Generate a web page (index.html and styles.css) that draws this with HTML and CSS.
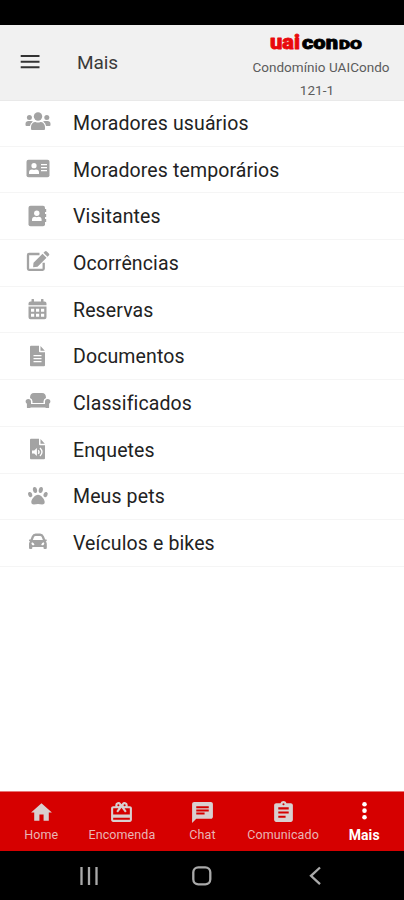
FILE: index.html
```
<!DOCTYPE html>
<html lang="pt-BR">
<head>
<meta charset="utf-8">
<meta name="viewport" content="width=device-width">
<title>Mais</title>
<link rel="stylesheet" href="styles.css">
</head>
<body>
<div class="status"></div>
<header class="header">
  <svg class="burger" width="20" height="16" viewBox="0 0 20 16"><path d="M.7 2h18.800M.7 7.800h18.800M.7 13.200h18.800" stroke="#333" stroke-width="2"/></svg>
  <h1 class="title">Mais</h1>
  <div class="condo">
    <svg class="logo" width="94" height="24" viewBox="0 0 94 24">
      <text class="logo-uai" x="1" y="18.800" textLength="30" lengthAdjust="spacingAndGlyphs">uai</text>
      <text class="logo-con" x="33" y="18.800" textLength="36" lengthAdjust="spacingAndGlyphs">con</text>
      <text class="logo-do" x="70" y="18.800" textLength="23" lengthAdjust="spacingAndGlyphs">DO</text>
    </svg>
    <span class="condo-name">Condomínio UAICondo</span>
    <span class="condo-unit">121-1</span>
  </div>
</header>
<main class="list">
  <a class="row"><svg class="icon" viewBox="0 0 28 28"><circle cx="14" cy="8.500" r="4.200"/><circle cx="5.400" cy="9.500" r="2.500"/><circle cx="22.800" cy="9.500" r="2.500"/><path d="M7 21v-2c0-3 2-5 4.500-5q2.500 1 5 0c2.500 0 4.500 2 4.500 5v2q0 1-1 1H8q-1 0-1-1ZM4.500 13h2.800q1 0 1.600.5-2.600 1.500-3 4.500H2.500q-1 0-1-1v-1.200Q1.700 13 4.500 13ZM23.500 13h-2.800q-1 0-1.600.5 2.600 1.500 3 4.500h3.400q1 0 1-1v-1.200Q26.300 13 23.500 13Z"/></svg><span>Moradores usuários</span></a>
  <a class="row"><svg class="icon" viewBox="0 0 28 28"><rect x="2.500" y="4.800" width="23" height="17.500" rx="2"/><g fill="#fff"><circle cx="10" cy="10.700" r="2.600"/><path d="M5 19v-1.500q0-3 3-3 2 .8 4 0 3 0 3 3v1.500ZM17 9h6v1.200h-6zM17 12h6v1.200h-6zM17 15h6v1.200h-6z"/></g></svg><span>Moradores temporários</span></a>
  <a class="row"><svg class="icon" viewBox="0 0 28 28"><rect x="4.500" y="3.800" width="16.500" height="20.500" rx="2"/><path d="M20.500 7h1.700v3h-1.700zM20.500 12h1.700v3h-1.700zM20.500 17h1.700v3h-1.700z"/><g fill="#fff"><circle cx="12.800" cy="11.200" r="2.700"/><path d="M8 19v-1.300q0-2.900 3-2.900 1.800.8 3.600 0 3 0 3 2.900V19Z"/></g></svg><span>Visitantes</span></a>
  <a class="row"><svg class="icon" viewBox="0 0 28 28"><path d="M15.500 6H5q-1 0-1 1v13.800q0 1 1 1h13.700q1 0 1-1v-6" fill="none" stroke="#a3a3a3" stroke-width="2.300"/><path d="m9.500 14.800 9-9 4 4-9 9-4.400.5ZM19.500 4.800l1.300-1.300q1-1 2 0l2 2q1 1 0 2l-1.300 1.300Z"/></svg><span>Ocorrências</span></a>
  <a class="row"><svg class="icon" viewBox="0 0 28 28"><path d="M7.500 4.500Q7.500 4 8 4h1.500q.5 0 .5.500v2h7v-2q0-.5.500-.5H19q.5 0 .5.500v2h1q2 0 2 2v1.700h-18V8.500q0-2 2-2h1ZM4.500 11.500h18v10.700q0 2-2 2h-14q-2 0-2-2Z"/><path fill="#fff" d="M7 13.800h3.200v2.900H7zM12 13.800h3.200v2.900H12zM17 13.800h3.200v2.900H17zM7 18.800h3.200v2.900H7zM12 18.800h3.200v2.900H12zM17 18.800h3.200v2.900H17z"/></svg><span>Reservas</span></a>
  <a class="row"><svg class="icon" viewBox="0 0 28 28"><path d="M7 3.800h8v5.500q0 1 1 1h5v13q0 1-1 1H7q-1 0-1-1V4.800q0-1 1-1ZM16.500 4l4.300 4.800h-4.300Z"/><path fill="#fff" d="M9.500 13h8v1.300h-8zM9.500 16h8v1.300h-8zM9.500 19h8v1.300h-8z"/></svg><span>Documentos</span></a>
  <a class="row"><svg class="icon" viewBox="0 0 28 28"><path d="M6 10q0-5 4-5h8q4 0 4 5-2.500.7-2.500 3.500V15h-11v-1.500Q8.500 10.700 6 10Z"/><path d="M4.300 11q2.700 0 2.700 2.700v2.300h14v-2.300q0-2.700 2.700-2.700t2.700 2.500q0 1.400-1.300 2.300v3.700q0 .6-.6.600h-2.400q-.6 0-.6-.7h-15q0 .7-.6.700H3.500q-.6 0-.6-.6v-3.700q-1.300-.9-1.300-2.300 0-2.500 2.700-2.500Z"/></svg><span>Classificados</span></a>
  <a class="row"><svg class="icon" viewBox="0 0 28 28"><path d="M7 3.800h8v5.500q0 1 1 1h5v13q0 1-1 1H7q-1 0-1-1V4.800q0-1 1-1ZM16.500 4l4.300 4.800h-4.300Z"/><path fill="#fff" d="M8 15.500h2.200l2.700-2.500v8l-2.700-2.500H8Z"/><path fill="none" stroke="#fff" stroke-width="1.300" d="M14.200 15.200q1.800 1.800 0 3.600M16 13q4 4 0 8"/></svg><span>Enquetes</span></a>
  <a class="row"><svg class="icon" viewBox="0 0 28 28"><ellipse cx="6.200" cy="12.600" rx="2" ry="2.700" transform="rotate(-22 6.200 12.600)"/><ellipse cx="11" cy="8" rx="2.100" ry="3" transform="rotate(-10 11 8)"/><ellipse cx="16.800" cy="8" rx="2.100" ry="3" transform="rotate(10 16.800 8)"/><ellipse cx="21.600" cy="12.600" rx="2" ry="2.700" transform="rotate(22 21.600 12.600)"/><path d="M14 12.800c3 0 6.700 4.600 6.700 7.300 0 3.800-4.200 2-6.700 2s-6.700 1.800-6.700-2c0-2.700 3.700-7.300 6.700-7.300Z"/></svg><span>Meus pets</span></a>
  <a class="row"><svg class="icon" viewBox="0 0 28 28"><path fill-rule="evenodd" d="m6.500 10.500 1.300-3.300Q8.900 4.600 11.600 4.600h4.500q2.700 0 3.800 2.600l1.300 3.300h1q.8 0 .6.800l-.2.800q-.1.400-.9.500 1.100.7 1.100 2.200v4.300q0 1-1 1h-1.300q-1 0-1-1v-1.200H8.300v1.200q0 1-1 1H6q-1 0-1-1v-4.300q0-1.500 1.100-2.200-.8-.1-.9-.5l-.2-.8q-.2-.8.6-.8ZM8.800 11h10.100L17.700 8q-.4-1-1.600-1h-4.500q-1.200 0-1.600 1ZM8 13.200a1.500 1.500 0 1 0 2.500 2.500Q9.700 13.400 8 13.200ZM19.700 13.200a1.500 1.500 0 1 1-2.500 2.500q.8-2.300 2.500-2.500Z"/></svg><span>Veículos e bikes</span></a>
</main>
<nav class="tabs">
  <a class="tab"><svg viewBox="0 0 24 24"><path d="M10 20v-6h4v6h5v-8h3L12 3 2 12h3v8z"/></svg><span>Home</span></a>
  <a class="tab"><svg viewBox="0 0 24 24"><path d="M20 6h-2.180c.11-.31.180-.65.180-1a3 3 0 0 0-5.500-1.650l-.5.670-.5-.680A3 3 0 0 0 6 5c0 .35.070.69.180 1H4c-1.110 0-1.990.89-1.990 2L2 19c0 1.110.89 2 2 2h16c1.110 0 2-.89 2-2V8c0-1.110-.89-2-2-2zm-5-2a1 1 0 1 1 0 2 1 1 0 0 1 0-2zM9 4a1 1 0 1 1 0 2 1 1 0 0 1 0-2zm11 15H4v-2h16v2zm0-5H4V8h5.080L7 10.830 8.620 12 12 7.400l3.380 4.600L17 10.830 14.920 8H20v6z"/></svg><span>Encomenda</span></a>
  <a class="tab"><svg viewBox="0 0 24 24"><path d="M20 2H4c-1.100 0-1.990.9-1.990 2L2 22l4-4h14c1.100 0 2-.9 2-2V4c0-1.100-.9-2-2-2zM6 9h12v2H6V9zm8 5H6v-2h8v2zm4-6H6V6h12v2z"/></svg><span>Chat</span></a>
  <a class="tab"><svg viewBox="0 0 24 24"><path d="M19 3h-4.180C14.400 1.840 13.300 1 12 1s-2.400.84-2.820 2H5c-1.100 0-2 .9-2 2v14c0 1.100.9 2 2 2h14c1.100 0 2-.9 2-2V5c0-1.100-.9-2-2-2zm-7 0a1 1 0 1 1 0 2 1 1 0 0 1 0-2zm2 14H7v-2h7v2zm3-4H7v-2h10v2zm0-4H7V7h10v2z"/></svg><span>Comunicado</span></a>
  <a class="tab active"><svg viewBox="0 0 24 24"><circle cx="12" cy="4" r="2.200"/><circle cx="12" cy="10.200" r="2.200"/><circle cx="12" cy="16.500" r="2.200"/></svg><span>Mais</span></a>
</nav>
<footer class="system">
  <svg viewBox="0 0 24 24"><path d="M4.500 3v18M12 3v18M19.500 3v18"/></svg>
  <svg viewBox="0 0 24 24"><rect x="3.300" y="3.300" width="17" height="17" rx="5"/></svg>
  <svg viewBox="0 0 24 24"><path d="m17 3.500-9 8.300 9 8.300"/></svg>
</footer>
</body>
</html>
```
FILE: styles.css
```
* { box-sizing: border-box; }
body {
  margin: 0;
  width: 404px;
  height: 900px;
  display: flex;
  flex-direction: column;
  overflow: hidden;
  background: #fff;
  font-family: Roboto, sans-serif;
}
.status { height: 25px; background: #000; }
.header {
  height: 76px;
  display: flex;
  align-items: center;
  background: #f1f1f1;
  border-bottom: 1px solid #e9e9e9;
  padding-left: 20px;
}
.burger { margin-bottom: 1px; }
.title {
  margin: 0 0 0 37px;
  font-size: 19px;
  font-weight: 400;
  letter-spacing: -.1px;
  color: #3a3a3a;
}
.condo {
  width: 148px;
  margin-left: auto;
  margin-right: 9px;
  height: 75px;
  padding-top: 5px;
  display: flex;
  flex-direction: column;
  align-items: center;
  color: #5c5c5c;
  font-size: 13.500px;
  white-space: nowrap;
}
.logo { margin-right: 10px; flex: none; overflow: visible; }
.logo text { font-family: Roboto, sans-serif; font-weight: 900; stroke-width: .8px; stroke-linejoin: round; }
.logo-uai { font-size: 20.500px; fill: #e9090d; stroke: #e9090d; }
.logo-con { font-size: 18.500px; fill: #000; stroke: #000; }
.logo-do { font-size: 13.500px; fill: #000; stroke: #000; }
.condo-name { line-height: 24px; margin-top: 1px; letter-spacing: .03px; }
.condo-unit { line-height: 22px; margin-right: 8px; letter-spacing: .1px; }
.list { flex: 1; margin-top: -1px; }
.row {
  display: flex;
  align-items: center;
  height: 46.700px;
  padding: 1px 0 0 24px;
  border-bottom: 1px solid #f5f5f5;
  color: #222;
  font-size: 19.500px;
  letter-spacing: .12px;
}
.icon { width: 28px; height: 28px; margin: 0 21px 2px 0; fill: #a3a3a3; }
.tabs {
  height: 60px;
  background: #d60000;
  border-top: 1px solid #e87575;
  display: grid;
  grid-template-columns: repeat(5, 1fr);
  padding-left: 1px;
}
.tab {
  display: flex;
  flex-direction: column;
  align-items: center;
  padding-top: 8px;
  color: #e9b5b5;
  font-size: 12.500px;
  letter-spacing: .1px;
}
.tab svg { width: 25px; height: 25px; fill: #d9d0d0; }
.tab span { line-height: 20px; }
.tab.active { color: #fff; font-size: 14px; font-weight: 700; padding-left: 1px; }
.tab.active svg { fill: #fff; }
.system {
  height: 49px;
  background: #000;
  display: flex;
  justify-content: center;
  align-items: center;
  gap: 89px;
}
.system svg { width: 24px; height: 24px; fill: none; stroke: #aaa; stroke-width: 2.300; }
```
